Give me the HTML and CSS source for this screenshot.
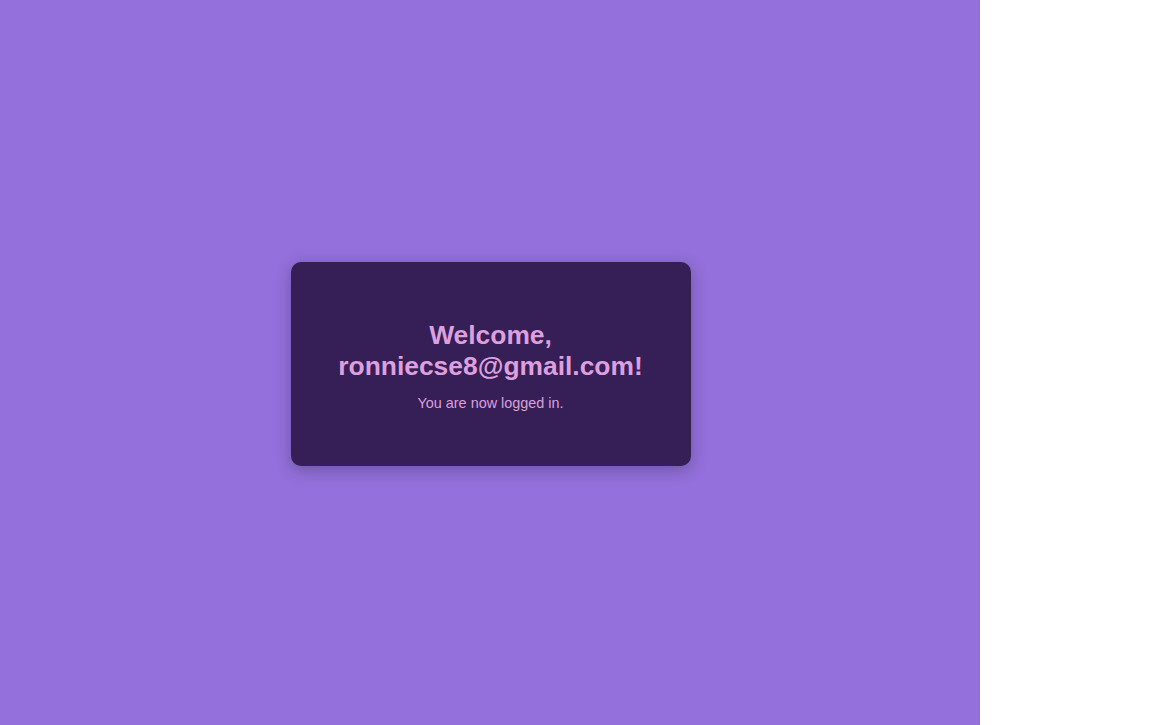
FILE: index.html
```html
<!DOCTYPE html>
<html lang="en">
<head>
<meta charset="utf-8">
<title>Welcome</title>
<link rel="stylesheet" href="styles.css">
</head>
<body>
<div class="page">
  <div class="card">
    <h2 class="title">Welcome, ronniecse8@gmail.com!</h2>
    <p class="subtitle">You are now logged in.</p>
  </div>
</div>
</body>
</html>
```

FILE: styles.css
```css
html, body {
  margin: 0;
  padding: 0;
  background: #ffffff;
}
body {
  font-family: "Liberation Sans", Arial, sans-serif;
}
.page {
  width: 980px;
  height: 725px;
  box-sizing: border-box;
  padding: 3px 0 0 1px;
  background: #9370db;
  display: flex;
  align-items: center;
  justify-content: center;
}
.card {
  width: 400px;
  box-sizing: border-box;
  padding: 40px 40px;
  background: #361e57;
  border-radius: 10px;
  box-shadow: 0 4px 16px rgba(0, 0, 0, 0.25);
  text-align: center;
  color: #dda0dd;
}
.title {
  margin: 18px 0 13px;
  font-size: 26.4px;
  font-weight: bold;
  line-height: 31px;
}
.subtitle {
  margin: 0 0 14px;
  font-size: 14.4px;
  line-height: 17px;
}
```
